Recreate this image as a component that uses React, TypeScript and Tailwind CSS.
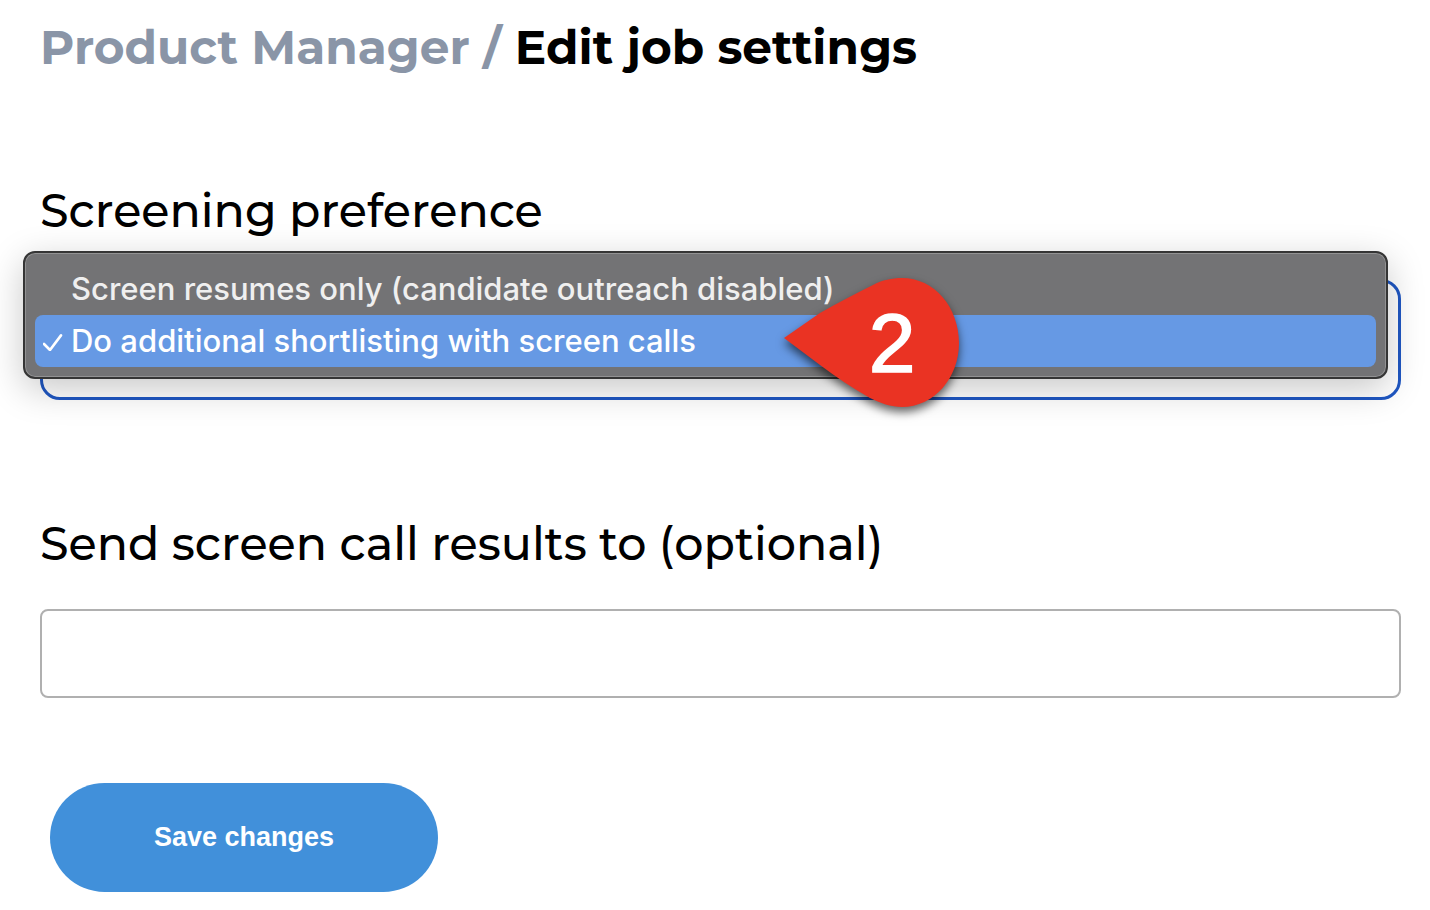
import React, { useState } from 'react';

const SCREENING_OPTIONS = [
  { value: 'resumes', label: 'Screen resumes only (candidate outreach disabled)' },
  { value: 'calls', label: 'Do additional shortlisting with screen calls' },
];

const CheckIcon: React.FC = () => (
  <svg viewBox="0 0 20 20" className="h-5 w-5" fill="none" stroke="currentColor" strokeWidth="2.6" strokeLinecap="round" strokeLinejoin="round">
    <path d="M1 13 L7 19 L18 4.4" />
  </svg>
);

const StepMarker: React.FC<{ step: number }> = ({ step }) => (
  <svg
    viewBox="0 0 175 129"
    className="pointer-events-none absolute -top-px left-[744px] h-[129px] w-[175px] overflow-visible drop-shadow-[0_5px_5px_rgba(0,0,0,0.6)]"
  >
    <path
      fill="#ea3323"
      d="M0 60 C12 52 24 43 36 35 C53 25 71 16 89 7 C98 2 108 0 118 0 C150 0 175 29 175 65 C175 100 150 129 118 129 C107 129 96 125 86 120 C68 110 52 99 36 87 C24 78 12 69 0 60 Z"
    />
    <text x="108" y="94" textAnchor="middle" fontSize="84" fill="#fff" stroke="#fff" strokeWidth="1.6" className="font-['Liberation_Sans',sans-serif]">
      {step}
    </text>
  </svg>
);

const App: React.FC = () => {
  const [screening, setScreening] = useState('calls');
  const [email, setEmail] = useState('');

  return (
    <main className="pt-[18px] pr-[29px] pb-[18px] pl-10 font-[Montserrat,sans-serif] text-black">
      <h1 className="text-[47px] leading-[60px] font-bold">
        <a href="#job" className="text-[#8a95a7]">Product Manager /</a> Edit job settings
      </h1>

      <form onSubmit={(e) => e.preventDefault()}>
        <label htmlFor="screening" className="mt-[103px] block text-[46px] leading-[60px] font-medium">
          Screening preference
        </label>
        <div className="relative mt-[38px]">
          <select
            id="screening"
            value={screening}
            onChange={(e) => setScreening(e.target.value)}
            className="block h-[121px] w-full appearance-none rounded-[20px] border-3 border-[#1f57c3] bg-white px-7 text-[31px] outline-none"
          >
            {SCREENING_OPTIONS.map((option) => (
              <option key={option.value} value={option.value}>{option.label}</option>
            ))}
          </select>

          <div
            role="listbox"
            aria-label="Screening preference"
            className="absolute -top-7 right-[13px] -left-[17px] rounded-xl border-2 border-[#353535] bg-[#737375] px-[10px] py-[10px] font-[Inter,sans-serif] shadow-[inset_0_0_0_1px_#929293,0_10px_36px_rgba(0,0,0,0.22)]"
          >
            {SCREENING_OPTIONS.map((option) => {
              const selected = option.value === screening;
              return (
                <button
                  key={option.value}
                  type="button"
                  role="option"
                  aria-selected={selected}
                  onClick={() => setScreening(option.value)}
                  className={`flex h-[52px] w-full items-center gap-2 rounded-lg pl-2 text-left text-[31px] font-medium ${
                    selected ? 'bg-[#6699e4] text-white' : 'text-[#efefef]'
                  }`}
                >
                  <span className="w-5 shrink-0">{selected && <CheckIcon />}</span>
                  {option.label}
                </button>
              );
            })}
          </div>
          <StepMarker step={2} />
        </div>

        <label htmlFor="results-email" className="mt-[114px] block text-[46px] leading-[60px] font-medium">
          Send screen call results to (optional)
        </label>
        <input
          id="results-email"
          type="text"
          value={email}
          onChange={(e) => setEmail(e.target.value)}
          className="mt-[35px] block h-[89px] w-full rounded-lg border-2 border-[#b0b0b0] px-6 text-[31px] outline-none"
        />

        <button
          type="submit"
          className="mt-[85px] ml-[10px] h-[109px] rounded-full bg-[#4190da] px-[104px] font-['Liberation_Sans',sans-serif] text-[27px] font-bold text-white"
        >
          Save changes
        </button>
      </form>
    </main>
  );
};

export default App;
